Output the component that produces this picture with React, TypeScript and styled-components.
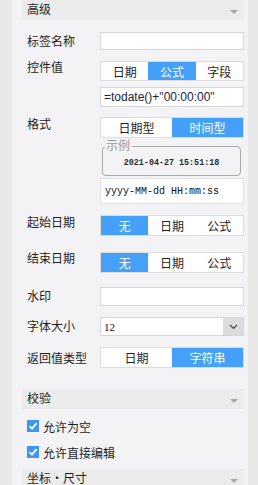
import React from 'react'
import styled, { createGlobalStyle } from 'styled-components'

const GlobalStyle = createGlobalStyle`
  html, body {
    margin: 0;
    padding: 0;
    background: #e8e8e8;
    font-family: "Liberation Sans", "Noto Sans CJK SC", sans-serif;
    font-size: 12px;
    color: #1e1e1e;
    overflow: hidden;
  }
`

const BLUE = '#44a0f8'

const Panel = styled.div`
  margin-left: 12px;
  width: 236px;
  height: 485px;
  background: #f3f3f5;
  padding: 0 4px 0 10px;
  box-sizing: border-box;
  display: flex;
  flex-direction: column;
`

const SectionHeader = styled.div<{ $top?: number }>`
  margin-top: ${p => p.$top ?? 0}px;
  height: 20px;
  flex-shrink: 0;
  background: #ebebeb;
  display: flex;
  align-items: center;
  justify-content: space-between;
  padding: 0 6px 0 5px;
  font-size: 12px;
  line-height: 14px;
  color: #1e1e1e;
`

const Caret = styled.span`
  width: 0;
  height: 0;
  border-left: 4px solid transparent;
  border-right: 4px solid transparent;
  border-top: 4px solid #a8a8a8;
  margin-top: 3px;
`

const Row = styled.div<{ $top: number }>`
  margin-top: ${p => p.$top}px;
  display: flex;
  flex-shrink: 0;
`

const Label = styled.div<{ $pad: number }>`
  width: 78px;
  flex-shrink: 0;
  padding: ${p => p.$pad}px 0 0 5px;
  box-sizing: border-box;
  line-height: 14px;
  font-size: 12px;
`

const Control = styled.div`
  flex: 1;
  display: flex;
  flex-direction: column;
`

const TextBox = styled.div<{ $h: number }>`
  height: ${p => p.$h}px;
  background: #fff;
  border: 1px solid #d6d6d6;
  box-sizing: border-box;
  display: flex;
  align-items: center;
  padding-left: 3px;
  font-size: 12px;
  color: #1c1c40;
  white-space: nowrap;
  overflow: hidden;
`

const FormulaBox = styled(TextBox)`
  margin-top: 6px;
`

const Segmented = styled.div<{ $h: number }>`
  height: ${p => p.$h}px;
  display: flex;
  border: 1px solid #dcdcdc;
  box-sizing: border-box;
  background: #fff;
`

const Segment = styled.div<{ $active?: boolean }>`
  flex: 1;
  display: flex;
  align-items: center;
  justify-content: center;
  font-size: 12px;
  background: ${p => (p.$active ? BLUE : '#fff')};
  color: ${p => (p.$active ? '#fff' : '#1e1e1e')};
`

const Sample = styled.fieldset`
  margin: 3px 3px 0 2px;
  padding: 0;
  min-width: 0;
  border: 1px solid #a9a9a9;
  border-radius: 4px;
`

const SampleLegend = styled.legend`
  margin-left: 2px;
  padding: 0 2px 0 1px;
  font-size: 12px;
  line-height: 11px;
  color: #9a9a9a;
`

const SampleText = styled.div`
  font-family: "Liberation Mono", "DejaVu Sans Mono", monospace;
  font-size: 8.4px;
  font-weight: bold;
  line-height: 23px;
  color: #2a2a2a;
  text-align: center;
`

const FormatBox = styled(TextBox)`
  margin-top: 2px;
  border-color: #e2e2e2;
  font-family: "Liberation Mono", "DejaVu Sans Mono", monospace;
  font-size: 10px;
  color: #111;
  padding-left: 4px;
`

const Select = styled.div`
  height: 19px;
  display: flex;
  border: 1px solid #d6d6d6;
  box-sizing: border-box;
  background: #fff;
`

const SelectValue = styled.div`
  flex: 1;
  display: flex;
  align-items: center;
  padding-left: 3px;
  font-family: "Liberation Serif", serif;
  font-size: 11px;
  color: #111;
`

const SelectButton = styled.div`
  width: 20px;
  background: #dcdcde;
  display: flex;
  align-items: center;
  justify-content: center;
`

const CheckRow = styled.div<{ $top: number }>`
  margin-top: ${p => p.$top}px;
  height: 16px;
  display: flex;
  align-items: center;
  padding-left: 5px;
  flex-shrink: 0;
  font-size: 12px;
`

const CheckBox = styled.span`
  width: 12px;
  height: 12px;
  background: #3d96f2;
  display: flex;
  align-items: center;
  justify-content: center;
  margin-right: 4px;
`

const Check = () => (
  <CheckBox>
    <svg width="10" height="10" viewBox="0 0 10 10">
      <path d="M1.5 5.2 L4 7.6 L8.6 2.2" stroke="#fff" strokeWidth="1.8" fill="none" />
    </svg>
  </CheckBox>
)

const App: React.FC = () => {
  return (
    <>
      <GlobalStyle />
      <Panel>
        <SectionHeader>
          <span>高级</span>
          <Caret />
        </SectionHeader>

        <Row $top={12}>
          <Label $pad={3}>标签名称</Label>
          <Control>
            <TextBox $h={18} />
          </Control>
        </Row>

        <Row $top={11}>
          <Label $pad={0}>控件值</Label>
          <Control>
            <Segmented $h={20}>
              <Segment>日期</Segment>
              <Segment $active>公式</Segment>
              <Segment>字段</Segment>
            </Segmented>
            <FormulaBox $h={20}>=todate()+"00:00:00"</FormulaBox>
          </Control>
        </Row>

        <Row $top={10}>
          <Label $pad={1}>格式</Label>
          <Control>
            <Segmented $h={21}>
              <Segment>日期型</Segment>
              <Segment $active>时间型</Segment>
            </Segmented>
            <Sample>
              <SampleLegend>示例</SampleLegend>
              <SampleText>2021-04-27 15:51:18</SampleText>
            </Sample>
            <FormatBox $h={26}>yyyy-MM-dd HH:mm:ss</FormatBox>
          </Control>
        </Row>

        <Row $top={11}>
          <Label $pad={1}>起始日期</Label>
          <Control>
            <Segmented $h={21}>
              <Segment $active>无</Segment>
              <Segment>日期</Segment>
              <Segment>公式</Segment>
            </Segmented>
          </Control>
        </Row>

        <Row $top={16}>
          <Label $pad={0}>结束日期</Label>
          <Control>
            <Segmented $h={21}>
              <Segment $active>无</Segment>
              <Segment>日期</Segment>
              <Segment>公式</Segment>
            </Segmented>
          </Control>
        </Row>

        <Row $top={14}>
          <Label $pad={3}>水印</Label>
          <Control>
            <TextBox $h={19} />
          </Control>
        </Row>

        <Row $top={11}>
          <Label $pad={3}>字体大小</Label>
          <Control>
            <Select>
              <SelectValue>12</SelectValue>
              <SelectButton>
                <svg width="9" height="6" viewBox="0 0 9 6">
                  <path d="M1 1 L4.5 4.5 L8 1" stroke="#444" strokeWidth="1.2" fill="none" />
                </svg>
              </SelectButton>
            </Select>
          </Control>
        </Row>

        <Row $top={11}>
          <Label $pad={5}>返回值类型</Label>
          <Control>
            <Segmented $h={21}>
              <Segment>日期</Segment>
              <Segment $active>字符串</Segment>
            </Segmented>
          </Control>
        </Row>

        <SectionHeader $top={21}>
          <span>校验</span>
          <Caret />
        </SectionHeader>

        <CheckRow $top={9}>
          <Check />
          允许为空
        </CheckRow>
        <CheckRow $top={10}>
          <Check />
          允许直接编辑
        </CheckRow>

        <SectionHeader $top={9}>
          <span>坐标・尺寸</span>
          <Caret />
        </SectionHeader>
      </Panel>
    </>
  )
}

export default App
